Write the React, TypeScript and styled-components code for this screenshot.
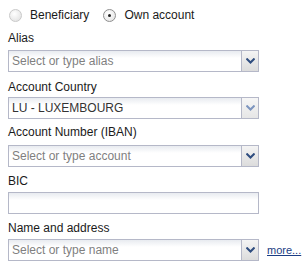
import React from "react";
import styled, { createGlobalStyle } from "styled-components";

const Global = createGlobalStyle`
  html, body { margin: 0; padding: 0; background: #fff; }
  body { font-family: "Liberation Sans", Arial, sans-serif; font-size: 12px; color: #1a1a1a; }
`;

const Page = styled.div`
  width: 307px;
  height: 265px;
  box-sizing: border-box;
  padding: 5px 0 0 8px;
  display: flex;
  flex-direction: column;
`;

const RadioRow = styled.div`
  display: flex;
  align-items: center;
  height: 20px;
  margin-bottom: 3px;
`;

const RadioOption = styled.label`
  display: flex;
  align-items: center;
  gap: 8px;
  margin-right: 13px;
  margin-left: 1px;
  line-height: 20px;
`;

const Circle = styled.span<{ $checked?: boolean }>`
  position: relative;
  width: 13px;
  height: 13px;
  box-sizing: border-box;
  border-radius: 50%;
  border: 1px solid ${(p) => (p.$checked ? "#8f8f8f" : "#c9c9c9")};
  background: ${(p) =>
    p.$checked
      ? "radial-gradient(circle at 40% 35%, #ffffff 0%, #e6e6e6 80%)"
      : "radial-gradient(circle at 40% 35%, #ffffff 0%, #e2e2e2 85%)"};
  &::after {
    content: "";
    display: ${(p) => (p.$checked ? "block" : "none")};
    position: absolute;
    left: 4px;
    top: 4px;
    width: 3px;
    height: 3px;
    border-radius: 50%;
    background: #222;
  }
`;

const Field = styled.div<{ $gap?: number }>`
  display: flex;
  flex-direction: column;
  margin-bottom: ${(p) => p.$gap ?? 3}px;
`;

const Label = styled.div<{ $space?: number }>`
  line-height: 20px;
  height: 20px;
  margin-bottom: ${(p) => p.$space ?? 2}px;
`;

const Row = styled.div`
  display: flex;
  align-items: center;
`;

const Box = styled.div`
  width: 251px;
  height: 22px;
  box-sizing: border-box;
  border: 1px solid #b5b8c8;
  background: linear-gradient(#e8ebf0 0px, #ffffff 7px, #ffffff 100%);
  display: flex;
  align-items: stretch;
`;

const Text = styled.div<{ $placeholder?: boolean }>`
  flex: 1;
  padding-left: 3px;
  line-height: 20px;
  color: ${(p) => (p.$placeholder ? "#7f7f7f" : "#333")};
  white-space: nowrap;
  overflow: hidden;
`;

const Trigger = styled.div<{ $disabled?: boolean }>`
  width: 16px;
  border-left: 1px solid #b5b8c8;
  background: ${(p) =>
    p.$disabled
      ? "linear-gradient(#f6f6f6, #e6e6e6)"
      : "linear-gradient(#f4f4f4, #dcdcdc)"};
  display: flex;
  align-items: center;
  justify-content: center;
`;

const More = styled.a`
  margin-left: 8px;
  font-size: 11px;
  color: #1b3d84;
  text-decoration: underline;
`;

const Arrow = ({ disabled }: { disabled?: boolean }) => (
  <svg width="9" height="6" viewBox="0 0 9 6">
    <path d="M0.5 0.5 L4.5 4.5 L8.5 0.5" fill="none" stroke={disabled ? "#7d95bf" : "#2f4d7f"} strokeWidth="2" />
  </svg>
);

export default function App() {
  return (
    <>
      <Global />
      <Page>
        <RadioRow>
          <RadioOption>
            <Circle />
            Beneficiary
          </RadioOption>
          <RadioOption>
            <Circle $checked />
            Own account
          </RadioOption>
        </RadioRow>
        <Field $gap={5}>
          <Label>Alias</Label>
          <Box>
            <Text $placeholder>Select or type alias</Text>
            <Trigger><Arrow /></Trigger>
          </Box>
        </Field>
        <Field>
          <Label $space={0}>Account Country</Label>
          <Box>
            <Text>LU - LUXEMBOURG</Text>
            <Trigger $disabled><Arrow disabled /></Trigger>
          </Box>
        </Field>
        <Field $gap={4}>
          <Label $space={3}>Account Number (IBAN)</Label>
          <Box>
            <Text $placeholder>Select or type account</Text>
            <Trigger><Arrow /></Trigger>
          </Box>
        </Field>
        <Field $gap={4}>
          <Label $space={1}>BIC</Label>
          <Box>
            <Text />
          </Box>
        </Field>
        <Field>
          <Label $space={1}>Name and address</Label>
          <Row>
            <Box>
              <Text $placeholder>Select or type name</Text>
              <Trigger><Arrow /></Trigger>
            </Box>
            <More href="#">more...</More>
          </Row>
        </Field>
      </Page>
    </>
  );
}
